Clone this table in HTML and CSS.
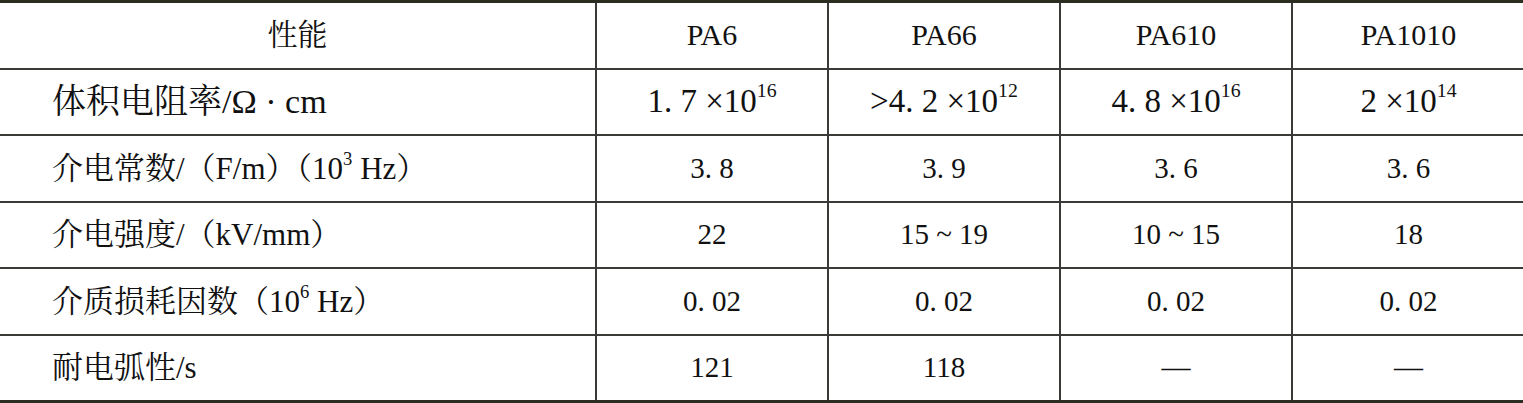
FILE: index.html
```html
<!DOCTYPE html>
<html lang="zh-CN">
<head>
    <meta charset="UTF-8">
    <meta name="viewport" content="width=device-width, initial-scale=1.0">
    <title>PA 电性能</title>
    <link rel="stylesheet" href="styles.css">
</head>
<body>
    <table class="props">
        <colgroup>
            <col class="c-name">
            <col class="c-val">
            <col class="c-val">
            <col class="c-val">
            <col class="c-val">
        </colgroup>
        <thead>
            <tr>
                <th>性能</th>
                <th>PA6</th>
                <th>PA66</th>
                <th>PA610</th>
                <th>PA1010</th>
            </tr>
        </thead>
        <tbody>
            <tr class="big">
                <td class="name">体积电阻率/Ω · cm</td>
                <td>1. 7 ×10<sup>16</sup></td>
                <td>&gt;4. 2 ×10<sup>12</sup></td>
                <td>4. 8 ×10<sup>16</sup></td>
                <td>2 ×10<sup>14</sup></td>
            </tr>
            <tr>
                <td class="name">介电常数/（F/m）（10<sup>3</sup> Hz）</td>
                <td>3. 8</td>
                <td>3. 9</td>
                <td>3. 6</td>
                <td>3. 6</td>
            </tr>
            <tr>
                <td class="name">介电强度/（kV/mm）</td>
                <td>22</td>
                <td>15 ~ 19</td>
                <td>10 ~ 15</td>
                <td>18</td>
            </tr>
            <tr>
                <td class="name">介质损耗因数（10<sup>6</sup> Hz）</td>
                <td>0. 02</td>
                <td>0. 02</td>
                <td>0. 02</td>
                <td>0. 02</td>
            </tr>
            <tr>
                <td class="name">耐电弧性/s</td>
                <td>121</td>
                <td>118</td>
                <td>—</td>
                <td>—</td>
            </tr>
        </tbody>
    </table>
</body>
</html>
```

FILE: styles.css
```css
body { margin: 0; background: #fff; color: #111; font-family: "Liberation Serif", "Times New Roman", "DejaVu Serif", "Noto Serif CJK SC", "Noto Sans CJK SC", serif; }
.props { width: 1523px; border-collapse: collapse; table-layout: fixed; border-top: 3px solid #2b2d21; border-bottom: 3px solid #2b2d21; }
.c-name { width: 596px; }
.c-val { width: 232px; }
.props th, .props td { height: 64.5px; padding: 0; text-align: center; vertical-align: middle; font-family: inherit; font-weight: normal; font-size: 29px; line-height: 1; border: 2px solid #3a3a36; white-space: nowrap; }
.props tr > :first-child { border-left: none; }
.props tr > :last-child { border-right: none; }
.props thead th { border-top: none; font-size: 30px; }
.props tbody tr:last-child td { border-bottom: none; }
.props td.name { text-align: left; padding-left: 52px; font-size: 31px; }
.props tr.big td { font-size: 33px; }
.props tr.big td.name { font-size: 34px; }
sup { font-size: 0.6em; vertical-align: 0.75em; line-height: 0; }
```
